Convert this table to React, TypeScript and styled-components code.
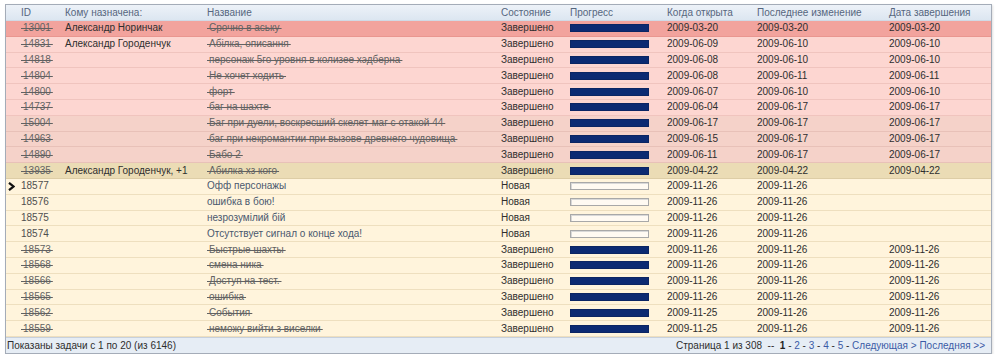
import React from "react";
import styled, { createGlobalStyle, css } from "styled-components";

const Global = createGlobalStyle`
  html, body { margin: 0; padding: 0; background: #ffffff; }
  body { font-family: "Liberation Sans", Arial, sans-serif; }
`;

type Tone = "hot" | "pink" | "rose" | "tan" | "cream";

const tones: Record<Tone, { bg: string; line: string }> = {
  hot: { bg: "#f2a39d", line: "#e9968f" },
  pink: { bg: "#fdd6d1", line: "#f0c4be" },
  rose: { bg: "#f5d2c9", line: "#e8c1b8" },
  tan: { bg: "#ebdcb5", line: "#ddcda6" },
  cream: { bg: "#fff4dc", line: "#eedfbf" },
};

const Page = styled.div`
  padding: 4px 0 0 5px;
`;

const Frame = styled.div`
  width: 987px;
  box-sizing: border-box;
  border: 1px solid #a4acb8;
  box-shadow: 1px 1px 2px rgba(0, 0, 0, 0.12);
  font-size: 10px;
  color: #2e2e2e;
`;

const cols = "59px 142px 294px 69px 97px 90px 132px 1fr";

const HeaderRow = styled.div`
  display: grid;
  grid-template-columns: ${cols};
  height: 16px;
  align-items: center;
  background: linear-gradient(#edf2f8, #dce6f1);
  border-bottom: 1px solid #d0dae6;
  box-sizing: border-box;
  color: #56667e;
`;

const Row = styled.div<{ $tone: Tone }>`
  display: grid;
  grid-template-columns: ${cols};
  height: 15.8px;
  box-sizing: border-box;
  align-items: center;
  background: ${(p) => tones[p.$tone].bg};
  border-bottom: 1px solid ${(p) => tones[p.$tone].line};
`;

const Cell = styled.div<{ $first?: boolean }>`
  position: relative;
  white-space: nowrap;
  overflow: visible;
  line-height: 14px;
  ${(p) =>
    p.$first &&
    css`
      padding-left: 15px;
    `}
`;

const Struck = styled.span`
  text-decoration: line-through;
  color: #626262;
`;

const Plain = styled.span`
  color: #4f4f4f;
`;

const Title = styled.span`
  color: #4a586e;
`;

const Marker = styled.svg`
  position: absolute;
  left: 2px;
  top: 3px;
`;

const Bar = styled.div<{ $full: boolean }>`
  width: 79px;
  height: 8px;
  box-sizing: border-box;
  border: 1px solid ${(p) => (p.$full ? "#0b2563" : "#a8a8a8")};
  background: ${(p) => (p.$full ? "#0c2a72" : "#fffaf2")};
  box-shadow: ${(p) => (p.$full ? "none" : "inset 1px 1px 0 #d8d8d8")};
`;

const Footer = styled.div`
  display: flex;
  justify-content: space-between;
  align-items: center;
  height: 15px;
  padding: 0 6px 0 1px;
  background: #e6edf5;
  border-top: 1px solid #c7d0dc;
  font-size: 10px;
  color: #2e2e2e;
`;

const Pager = styled.div`
  display: flex;
  align-items: center;
  white-space: pre;
`;

const PageLink = styled.span`
  color: #3b5ba6;
`;

const Current = styled.b`
  color: #222;
`;

type Task = {
  id: string;
  who?: string;
  title: string;
  done: boolean;
  opened: string;
  changed: string;
  closed?: string;
  tone: Tone;
  mark?: boolean;
};

const tasks: Task[] = [
  { id: "13001", who: "Александр Норинчак", title: "Срочно в аську", done: true, opened: "2009-03-20", changed: "2009-03-20", closed: "2009-03-20", tone: "hot" },
  { id: "14831", who: "Александр Городенчук", title: "Абілка, описання", done: true, opened: "2009-06-09", changed: "2009-06-10", closed: "2009-06-10", tone: "pink" },
  { id: "14818", title: "персонаж 5го уровня в колизее хэдберна", done: true, opened: "2009-06-08", changed: "2009-06-10", closed: "2009-06-10", tone: "pink" },
  { id: "14804", title: "Не хочет ходить", done: true, opened: "2009-06-08", changed: "2009-06-11", closed: "2009-06-11", tone: "pink" },
  { id: "14800", title: "форт", done: true, opened: "2009-06-07", changed: "2009-06-10", closed: "2009-06-10", tone: "pink" },
  { id: "14737", title: "баг на шахте", done: true, opened: "2009-06-04", changed: "2009-06-17", closed: "2009-06-17", tone: "pink" },
  { id: "15004", title: "Баг при дуели, воскресший скелет-маг с отакой 44", done: true, opened: "2009-06-17", changed: "2009-06-17", closed: "2009-06-17", tone: "rose" },
  { id: "14963", title: "баг при некромантии при вызове древнего чудовища", done: true, opened: "2009-06-15", changed: "2009-06-17", closed: "2009-06-17", tone: "rose" },
  { id: "14890", title: "Бабо 2", done: true, opened: "2009-06-11", changed: "2009-06-17", closed: "2009-06-17", tone: "rose" },
  { id: "13935", who: "Александр Городенчук, +1", title: "Абилка хз кого", done: true, opened: "2009-04-22", changed: "2009-04-22", closed: "2009-04-22", tone: "tan" },
  { id: "18577", title: "Офф персонажы", done: false, opened: "2009-11-26", changed: "2009-11-26", tone: "cream", mark: true },
  { id: "18576", title: "ошибка в бою!", done: false, opened: "2009-11-26", changed: "2009-11-26", tone: "cream" },
  { id: "18575", title: "незрозумілий бій", done: false, opened: "2009-11-26", changed: "2009-11-26", tone: "cream" },
  { id: "18574", title: "Отсутствует сигнал о конце хода!", done: false, opened: "2009-11-26", changed: "2009-11-26", tone: "cream" },
  { id: "18573", title: "Быстрые шахты", done: true, opened: "2009-11-26", changed: "2009-11-26", closed: "2009-11-26", tone: "cream" },
  { id: "18568", title: "смена ника", done: true, opened: "2009-11-26", changed: "2009-11-26", closed: "2009-11-26", tone: "cream" },
  { id: "18566", title: "Доступ на тест.", done: true, opened: "2009-11-26", changed: "2009-11-26", closed: "2009-11-26", tone: "cream" },
  { id: "18565", title: "ошибка", done: true, opened: "2009-11-26", changed: "2009-11-26", closed: "2009-11-26", tone: "cream" },
  { id: "18562", title: "События", done: true, opened: "2009-11-25", changed: "2009-11-26", closed: "2009-11-26", tone: "cream" },
  { id: "18559", title: "неможу вийти з виселки", done: true, opened: "2009-11-25", changed: "2009-11-26", closed: "2009-11-26", tone: "cream" },
];

const pad = (s: string) => "\u2009" + s + "\u2009";

export default function App() {
  return (
    <Page>
      <Global />
      <Frame>
        <HeaderRow>
          <Cell $first>ID</Cell>
          <Cell>Кому назначена:</Cell>
          <Cell>Название</Cell>
          <Cell>Состояние</Cell>
          <Cell>Прогресс</Cell>
          <Cell>Когда открыта</Cell>
          <Cell>Последнее изменение</Cell>
          <Cell>Дата завершения</Cell>
        </HeaderRow>
        {tasks.map((t) => (
          <Row key={t.id} $tone={t.tone}>
            <Cell $first>
              {t.mark && (
                <Marker width="7" height="9" viewBox="0 0 7 9">
                  <path d="M1 0.8 L5.5 4.5 L1 8.2" fill="none" stroke="#111" strokeWidth="2.2" />
                </Marker>
              )}
              {t.done ? <Struck>{pad(t.id)}</Struck> : <Plain>{t.id}</Plain>}
            </Cell>
            <Cell>{t.who ?? ""}</Cell>
            <Cell>{t.done ? <Struck>{pad(t.title)}</Struck> : <Title>{t.title}</Title>}</Cell>
            <Cell>{t.done ? "Завершено" : "Новая"}</Cell>
            <Cell>
              <Bar $full={t.done} />
            </Cell>
            <Cell>{t.opened}</Cell>
            <Cell>{t.changed}</Cell>
            <Cell>{t.closed ?? ""}</Cell>
          </Row>
        ))}
        <Footer>
          <span>Показаны задачи с 1 по 20 (из 6146)</span>
          <Pager>
            {"Страница 1 из 308  --  "}
            <Current>1</Current>
            {" - "}
            <PageLink>2</PageLink>
            {" - "}
            <PageLink>3</PageLink>
            {" - "}
            <PageLink>4</PageLink>
            {" - "}
            <PageLink>5</PageLink>
            {" - "}
            <PageLink>{"Следующая > Последняя >>"}</PageLink>
          </Pager>
        </Footer>
      </Frame>
    </Page>
  );
}
